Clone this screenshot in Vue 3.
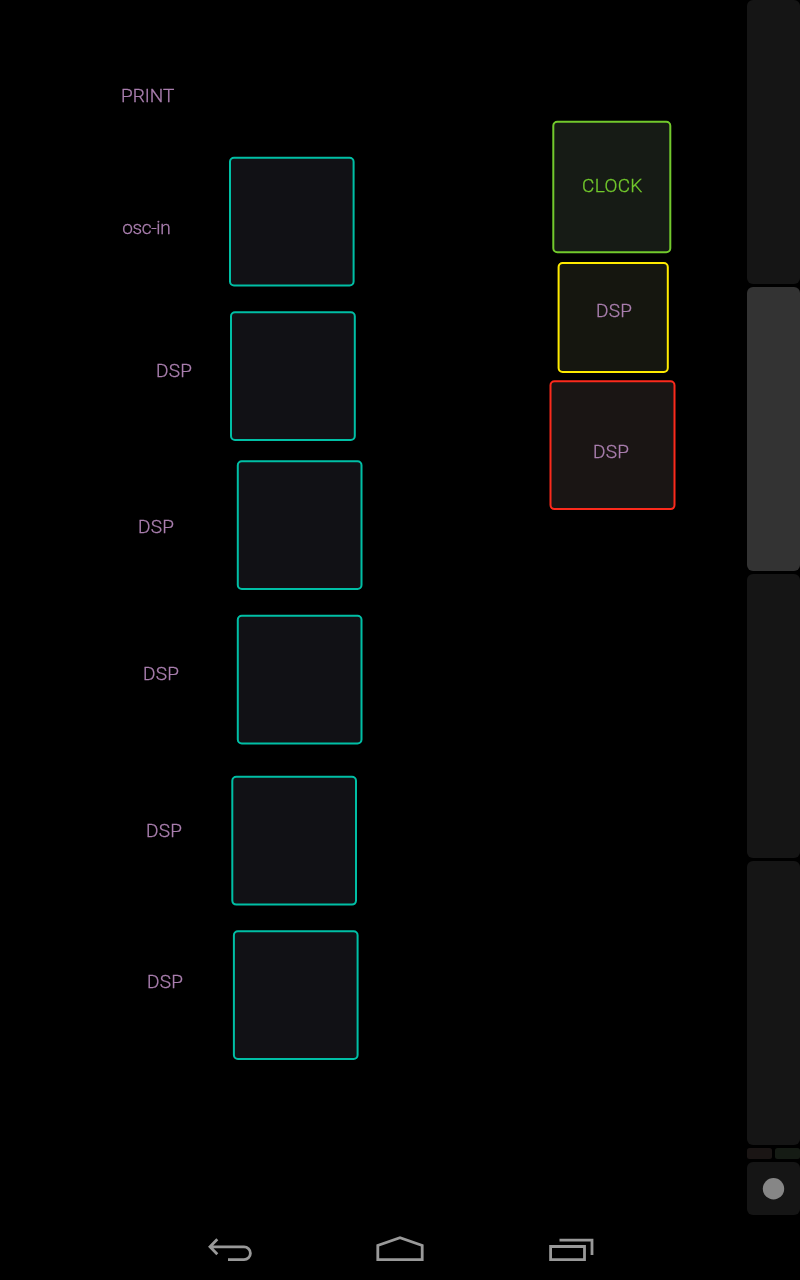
<script setup>
const teal = '#00bfa5'
const mauve = '#aa7faf'
const lime = '#72c92c'

const boxes = [
  { x: 230, y: 157.7, w: 123.6, h: 127.8, stroke: teal, fill: '#111115' },
  { x: 231, y: 312.3, w: 123.8, h: 127.6, stroke: teal, fill: '#111115' },
  { x: 237.8, y: 461.3, w: 123.7, h: 127.7, stroke: teal, fill: '#111115' },
  { x: 237.8, y: 615.7, w: 123.7, h: 127.7, stroke: teal, fill: '#111115' },
  { x: 232.3, y: 776.8, w: 123.7, h: 127.8, stroke: teal, fill: '#111115' },
  { x: 233.9, y: 931.3, w: 123.7, h: 127.7, stroke: teal, fill: '#111115' },
  { x: 553.3, y: 121.8, w: 117, h: 130.5, stroke: lime, fill: '#161b15' },
  { x: 558.6, y: 263, w: 109.2, h: 109, stroke: '#ffeb00', fill: '#15160f' },
  { x: 550.5, y: 381.3, w: 124, h: 127.8, stroke: '#fb2a1c', fill: '#1a1514' },
]

const labels = [
  { text: 'PRINT', x: 121, y: 101.8, color: mauve, kind: 'print' },
  { text: 'osc-in', x: 122.2, y: 233.8, color: mauve, kind: 'osc' },
  { text: 'DSP', x: 156, y: 376.8, color: mauve, kind: 'dsp' },
  { text: 'DSP', x: 138, y: 532.8, color: mauve, kind: 'dsp' },
  { text: 'DSP', x: 143, y: 679.8, color: mauve, kind: 'dsp' },
  { text: 'DSP', x: 146, y: 836.8, color: mauve, kind: 'dsp' },
  { text: 'DSP', x: 147, y: 987.8, color: mauve, kind: 'dsp' },
  { text: 'CLOCK', x: 582, y: 191.8, color: lime, kind: 'clock' },
  { text: 'DSP', x: 596, y: 316.8, color: mauve, kind: 'dsp' },
  { text: 'DSP', x: 593, y: 457.8, color: mauve, kind: 'dsp' },
]

const pages = [false, true, false, false]
</script>

<template>
  <div class="screen">
    <main class="workspace">
      <svg class="patch" width="747" height="1215" viewBox="0 0 747 1215">
        <rect
          v-for="(b, i) in boxes" :key="'b' + i"
          :x="b.x" :y="b.y" :width="b.w" :height="b.h" rx="4"
          :fill="b.fill" :stroke="b.stroke" stroke-width="2"
        />
        <text
          v-for="(l, i) in labels" :key="'l' + i"
          :class="l.kind" :x="l.x" :y="l.y" :fill="l.color" :stroke="l.color"
        >{{ l.text }}</text>
      </svg>
      <aside class="rail">
        <div v-for="(active, i) in pages" :key="i" class="page" :class="{ active }"></div>
        <div class="meters">
          <div class="meter warm"></div>
          <div class="meter cool"></div>
        </div>
        <div class="record">
          <svg width="53" height="53"><circle cx="26.5" cy="26.7" r="10.7" fill="#868686" /></svg>
        </div>
      </aside>
    </main>
    <nav class="navbar">
      <svg class="icon" width="80" height="50" viewBox="0 0 80 50">
        <path d="M27.3 14.3 20 21.8 27.3 29.3M20 21.8H54A6.4 6.4 0 0 1 54 34.6H38" />
      </svg>
      <svg class="icon" width="80" height="50" viewBox="0 0 80 50">
        <path d="M17.8 34.7V20.5L40 12.8 62.2 20.5V34.7Z" />
      </svg>
      <svg class="icon" width="80" height="50" viewBox="0 0 80 50">
        <path d="M20.6 21.5H54.5V34.7H20.6ZM29.5 15.2H62V30" />
      </svg>
    </nav>
  </div>
</template>

<style>
body { background: #000; overflow: hidden; }
</style>

<style scoped>
.screen {
  width: 800px;
  height: 1280px;
  background: #000;
  display: flex;
  flex-direction: column;
}
.workspace { display: flex; height: 1215px; }
.patch { display: block; flex: none; will-change: transform; }
.patch text {
  font-family: Roboto, "Liberation Sans", sans-serif;
  font-size: 19px;
  font-weight: 300;
  stroke-width: 0.3px;
}
.dsp { letter-spacing: 0.25px; }
.clock { letter-spacing: 0.35px; }
.osc { letter-spacing: -0.35px; }
.rail {
  width: 53px;
  display: flex;
  flex-direction: column;
  gap: 3px;
}
.page { flex: none; height: 284.1px; border-radius: 6px; background: #151515; }
.page.active { background: #333; }
.meters { flex: none; display: flex; gap: 3px; height: 11px; }
.meter { flex: 1; border-radius: 2.5px; }
.warm { background: #1a1514; }
.cool { background: #151b14; }
.record { flex: none; height: 52.6px; border-radius: 6px; background: #151515; }
.record svg { display: block; }
.navbar {
  height: 65px;
  box-sizing: border-box;
  padding-top: 10px;
  display: flex;
  justify-content: center;
  gap: 90px;
}
.icon { display: block; fill: none; stroke: #999; stroke-width: 2.8; }
</style>
